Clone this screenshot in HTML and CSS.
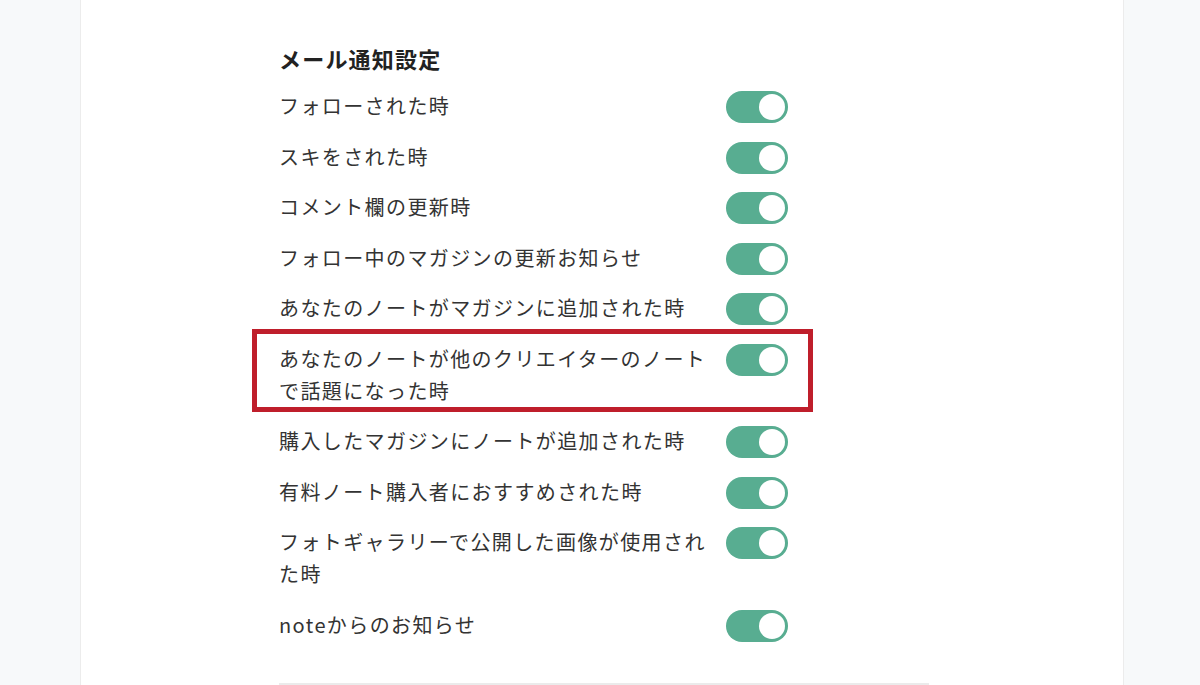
FILE: index.html
```html
<!DOCTYPE html>
<html lang="ja">
<head>
<meta charset="utf-8">
<title>メール通知設定</title>
<link rel="stylesheet" href="styles.css">
</head>
<body>
<div class="page">
  <main class="panel">
    <section class="settings">
      <h2 class="title">メール通知設定</h2>
      <ul class="list">
        <li class="row"><span class="label">フォローされた時</span><span class="toggle"><span class="knob"></span></span></li>
        <li class="row"><span class="label">スキをされた時</span><span class="toggle"><span class="knob"></span></span></li>
        <li class="row"><span class="label">コメント欄の更新時</span><span class="toggle"><span class="knob"></span></span></li>
        <li class="row"><span class="label">フォロー中のマガジンの更新お知らせ</span><span class="toggle"><span class="knob"></span></span></li>
        <li class="row"><span class="label">あなたのノートがマガジンに追加された時</span><span class="toggle"><span class="knob"></span></span></li>
        <li class="row highlighted"><span class="label">あなたのノートが他のクリエイターのノートで話題になった時</span><span class="toggle"><span class="knob"></span></span><span class="mark"></span></li>
        <li class="row"><span class="label">購入したマガジンにノートが追加された時</span><span class="toggle"><span class="knob"></span></span></li>
        <li class="row"><span class="label">有料ノート購入者におすすめされた時</span><span class="toggle"><span class="knob"></span></span></li>
        <li class="row"><span class="label">フォトギャラリーで公開した画像が使用された時</span><span class="toggle"><span class="knob"></span></span></li>
        <li class="row"><span class="label">noteからのお知らせ</span><span class="toggle"><span class="knob"></span></span></li>
      </ul>
      <div class="divider"></div>
    </section>
  </main>
</div>
</body>
</html>
```
FILE: styles.css
```css
html, body {
  margin: 0;
  padding: 0;
  background: #f7f9fa;
  overflow: hidden;
}

body {
  font-family: "Noto Sans CJK JP", "Noto Sans", sans-serif;
  color: #333;
}

.page {
  display: flex;
  height: 685px;
}

.panel {
  margin-left: 80px;
  width: 1044px;
  box-sizing: border-box;
  background: #fff;
  border-left: 1px solid #ececec;
  border-right: 1px solid #ececec;
  padding: 42px 0 0 198px;
}

.settings {
  width: 650px;
}

.title {
  margin: 0 0 16px;
  font-size: 22px;
  line-height: 32px;
  font-weight: 700;
  letter-spacing: 1.2px;
  color: #222;
}

.list {
  list-style: none;
  margin: 0;
  padding: 0;
  display: flex;
  flex-direction: column;
  gap: 18.5px;
}

.row {
  position: relative;
  display: grid;
  grid-template-columns: 437px 62px;
  column-gap: 10px;
  align-items: start;
}

.label {
  font-size: 20px;
  line-height: 32px;
  letter-spacing: 1.4px;
  color: #333;
}

.toggle {
  position: relative;
  top: 1px;
  display: block;
  width: 62px;
  height: 32px;
  border-radius: 16px;
  background: #58ad91;
}

.knob {
  position: absolute;
  top: 3px;
  right: 3px;
  width: 26px;
  height: 26px;
  border-radius: 50%;
  background: #fff;
}

.mark {
  position: absolute;
  left: -27px;
  top: -13.5px;
  width: 561px;
  height: 83px;
  box-sizing: border-box;
  border: 5px solid #bf1e2b;
  pointer-events: none;
}

.divider {
  margin-top: 42.5px;
  height: 2px;
  background: #ebebeb;
}
```
